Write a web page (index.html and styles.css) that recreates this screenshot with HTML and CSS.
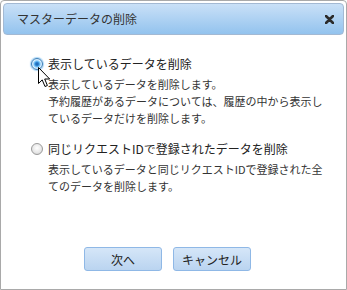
FILE: index.html
```html
<!DOCTYPE html>
<html>
    <head>
        <title>マスターデータの削除</title>
        <meta name="viewport" content="width=device-width, initial-scale=1">
        <link rel="stylesheet" href="styles.css">
    </head>
    <body>
        <div id="dialog">
            <div id="titlebar">
                <span id="title">マスターデータの削除</span>
                <span id="close">
                    <svg width="9" height="9" viewBox="0 0 9 9">
                        <path d="M1 1 L8 8 M8 1 L1 8" stroke="#2b2b2b" stroke-width="2.6" stroke-linecap="round"/>
                    </svg>
                </span>
            </div>
            <div id="content">
                <div class="option" id="opt1">
                    <div class="row">
                        <span class="radio checked"></span>
                        <span class="label">表示しているデータを削除</span>
                    </div>
                    <div class="desc">
                        表示しているデータを削除します。<br>
                        予約履歴があるデータについては、履歴の中から表示し<br>
                        ているデータだけを削除します。
                    </div>
                    <svg class="cursor" width="13" height="21" viewBox="0 0 13 21">
                        <path d="M0.5 0.5 L0.5 16.5 L4.2 12.9 L7 19.5 L9.4 18.5 L6.7 12 L11.7 12 Z" fill="#fff" stroke="#000" stroke-width="1"/>
                    </svg>
                </div>
                <div class="option" id="opt2">
                    <div class="row">
                        <span class="radio"></span>
                        <span class="label">同じリクエストIDで登録されたデータを削除</span>
                    </div>
                    <div class="desc">
                        表示しているデータと同じリクエストIDで登録された全<br>
                        てのデータを削除します。
                    </div>
                </div>
            </div>
            <div id="buttons">
                <button type="button" class="btn">次へ</button>
                <button type="button" class="btn">キャンセル</button>
            </div>
        </div>
    </body>
</html>
```

FILE: styles.css
```css
body{
    margin: 0;
    background-color: #ffffff;
    font-family: "Noto Sans CJK JP", "Noto Sans", sans-serif;
    color: #333333;
}
#dialog{
    width: 347px;
    height: 290px;
    box-sizing: border-box;
    border: 1px solid #a9a9a9;
    border-radius: 4px 4px 0 0;
    padding: 2px;
    background-color: #ffffff;
    display: flex;
    flex-direction: column;
}
#titlebar{
    height: 32px;
    box-sizing: border-box;
    border: 1px solid #a3b9d3;
    border-radius: 4px;
    background: linear-gradient(#c9e0f7, #93c3ee);
    display: flex;
    align-items: center;
    justify-content: space-between;
    padding: 0 9px 0 13px;
}
#title{
    font-size: 12px;
    line-height: 16px;
    color: #333333;
}
#close{
    display: flex;
    margin-top: 1px;
}
#content{
    padding: 20px 0 0 28px;
    flex: 1;
}
.option{
    position: relative;
}
#opt2{
    margin-top: 13px;
}
.row{
    display: flex;
    align-items: center;
}
.radio{
    width: 12px;
    height: 12px;
    border-radius: 50%;
    box-sizing: border-box;
    border: 1px solid #9a9a9a;
    background: radial-gradient(circle at 50% 40%, #ffffff 0, #e6e6e6 60%, #c9c9c9 100%);
    margin-right: 5px;
}
.radio.checked{
    border-color: #3c7fb8;
    background: radial-gradient(circle at 50% 50%, #1a5da8 0, #2f86d4 25%, #6fc0f4 40%, #d9efff 60%, #b9daf2 100%);
    box-shadow: 0 0 1px 1px #a8d4f5;
}
.label{
    font-size: 12px;
    line-height: 17px;
    color: #222222;
}
.desc{
    font-size: 11px;
    line-height: 17px;
    margin: 4px 0 0 17px;
    color: #333333;
}
.cursor{
    position: absolute;
    left: 7px;
    top: 12px;
}
#buttons{
    display: flex;
    gap: 11px;
    padding: 0 0 16px 81px;
}
.btn{
    width: 78px;
    height: 24px;
    border: 1px solid #8fb8e6;
    border-radius: 3px;
    background: linear-gradient(#d5e6f8, #bad4f0);
    font-family: "Noto Sans CJK JP", "Noto Sans", sans-serif;
    font-size: 12px;
    color: #222222;
    padding: 0;
}
```
